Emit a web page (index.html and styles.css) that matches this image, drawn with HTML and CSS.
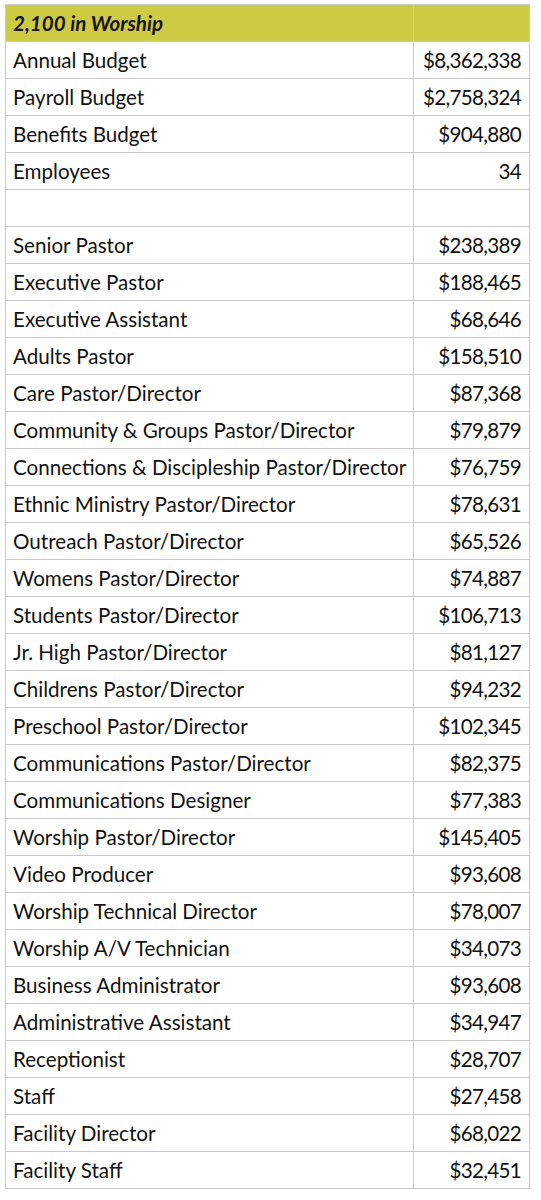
FILE: index.html
```
<!DOCTYPE html>
<html lang="en">
	<head>
		<meta charset="UTF-8" />
		<meta name="viewport" content="width=device-width, initial-scale=1.0" />
		<title>2,100 in Worship</title>
		<link rel="stylesheet" href="styles.css">
	</head>
	<body>
		<table class="budget">
			<tr class="head"><th>2,100 in Worship</th><th></th></tr>
			<tr><td>Annual Budget</td><td>$8,362,338</td></tr>
			<tr><td>Payroll Budget</td><td>$2,758,324</td></tr>
			<tr><td>Benefits Budget</td><td>$904,880</td></tr>
			<tr><td>Employees</td><td>34</td></tr>
			<tr><td></td><td></td></tr>
			<tr><td>Senior Pastor</td><td>$238,389</td></tr>
			<tr><td>Executive Pastor</td><td>$188,465</td></tr>
			<tr><td>Executive Assistant</td><td>$68,646</td></tr>
			<tr><td>Adults Pastor</td><td>$158,510</td></tr>
			<tr><td>Care Pastor/Director</td><td>$87,368</td></tr>
			<tr><td>Community &amp; Groups Pastor/Director</td><td>$79,879</td></tr>
			<tr><td>Connections &amp; Discipleship Pastor/Director</td><td>$76,759</td></tr>
			<tr><td>Ethnic Ministry Pastor/Director</td><td>$78,631</td></tr>
			<tr><td>Outreach Pastor/Director</td><td>$65,526</td></tr>
			<tr><td>Womens Pastor/Director</td><td>$74,887</td></tr>
			<tr><td>Students Pastor/Director</td><td>$106,713</td></tr>
			<tr><td>Jr. High Pastor/Director</td><td>$81,127</td></tr>
			<tr><td>Childrens Pastor/Director</td><td>$94,232</td></tr>
			<tr><td>Preschool Pastor/Director</td><td>$102,345</td></tr>
			<tr><td>Communications Pastor/Director</td><td>$82,375</td></tr>
			<tr><td>Communications Designer</td><td>$77,383</td></tr>
			<tr><td>Worship Pastor/Director</td><td>$145,405</td></tr>
			<tr><td>Video Producer</td><td>$93,608</td></tr>
			<tr><td>Worship Technical Director</td><td>$78,007</td></tr>
			<tr><td>Worship A/V Technician</td><td>$34,073</td></tr>
			<tr><td>Business Administrator</td><td>$93,608</td></tr>
			<tr><td>Administrative Assistant</td><td>$34,947</td></tr>
			<tr><td>Receptionist</td><td>$28,707</td></tr>
			<tr><td>Staff</td><td>$27,458</td></tr>
			<tr><td>Facility Director</td><td>$68,022</td></tr>
			<tr><td>Facility Staff</td><td>$32,451</td></tr>
		</table>
	</body>
</html>
```
FILE: styles.css
```
* {
	padding: 0;
	margin: 0;
}
body {
	background: #fff;
	padding: 4px 0 0 5px;
	font-family: Lato, "Open Sans", sans-serif;
	color: #111;
}
.budget {
	border-collapse: collapse;
	width: 525px;
	table-layout: fixed;
	font-size: 20.6px;
}
.budget td,
.budget th {
	height: 36px;
	border: 1px solid #c9c9c9;
	padding: 0 7px;
	vertical-align: middle;
	white-space: nowrap;
}
.budget td:first-child,
.budget th:first-child {
	width: 393px;
	text-align: left;
}
.budget td:last-child {
	text-align: right;
	letter-spacing: -0.7px;
	padding-right: 8px;
}
.head th {
	background: #cdca43;
	font-style: italic;
	font-weight: 700;
	color: #161616;
}
```
